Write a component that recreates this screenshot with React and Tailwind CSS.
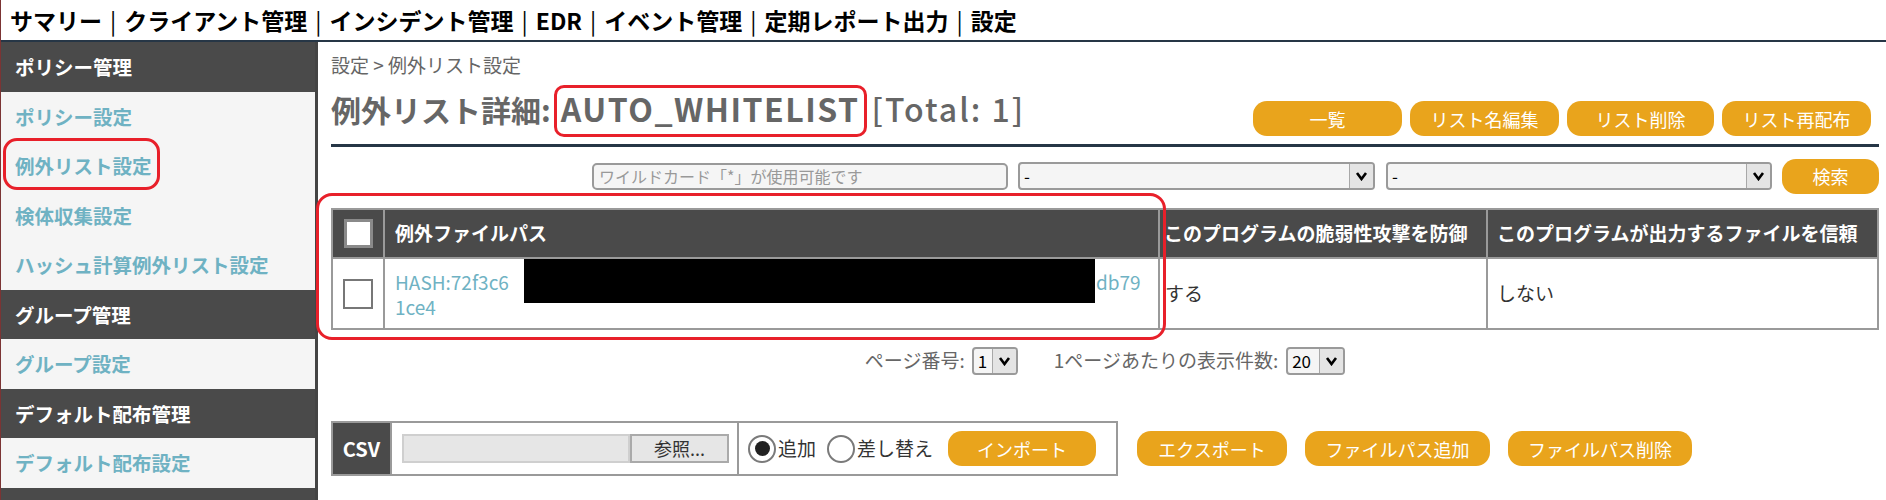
import React from 'react';

const NAV = ['サマリー', 'クライアント管理', 'インシデント管理', 'EDR', 'イベント管理', '定期レポート出力', '設定'];

const SIDEBAR = [
  { head: true, label: 'ポリシー管理' },
  { label: 'ポリシー設定' },
  { label: '例外リスト設定' },
  { label: '検体収集設定' },
  { label: 'ハッシュ計算例外リスト設定' },
  { head: true, label: 'グループ管理' },
  { label: 'グループ設定' },
  { head: true, label: 'デフォルト配布管理' },
  { label: 'デフォルト配布設定' },
  { head: true, label: '' },
];

function Chevron() {
  return (
    <svg width="13" height="10" viewBox="0 0 13 10">
      <path d="M2 2 L6.5 8 L11 2" fill="none" stroke="#000" strokeWidth="2.6" />
    </svg>
  );
}

function FakeSelect({ value, className }) {
  return (
    <div className={`flex items-stretch rounded-[4px] border-2 border-[#9a9a9a] bg-[#f5f5f5] overflow-hidden ${className}`}>
      <span className="flex-1 flex items-center pl-[4px] text-[17px] text-black">{value}</span>
      <span className="w-[24px] flex items-center justify-center border-l border-[#a8a8a8] bg-[#e4e4e4]">
        <Chevron />
      </span>
    </div>
  );
}

function OrangeBtn({ children, className }) {
  return (
    <button className={`h-[35px] rounded-[14px] bg-[#e9a41c] text-white text-[18px] leading-none ${className}`}>
      {children}
    </button>
  );
}

function Radio({ checked }) {
  return (
    <span className="w-[28px] h-[28px] rounded-full border-2 border-[#7a7a7a] bg-white flex items-center justify-center">
      {checked && <span className="w-[15px] h-[15px] rounded-full bg-[#222]" />}
    </span>
  );
}

export default function App() {
  return (
    <div className="relative w-[1886px] h-[500px] overflow-hidden bg-white border-l border-[#7b3434] font-['Noto_Sans_CJK_JP','Noto_Sans',sans-serif]">
      {/* top nav */}
      <div className="h-[40px] flex items-center pl-[9px] text-[23px] font-bold text-black whitespace-nowrap">
        {NAV.map((n, i) => (
          <span key={n} className="flex items-center">
            {i > 0 && <span className="mx-[8px] font-normal">|</span>}
            {n}
          </span>
        ))}
      </div>
      <div className="h-[2px] bg-[#263646]" />

      <div className="flex">
        {/* sidebar */}
        <div className="w-[319px] h-[458px] border-r-[3px] border-[#444] bg-[#f5f5f5] overflow-hidden">
          {SIDEBAR.map((s, i) => (
            <div key={i}
              className={`h-[49.5px] flex items-center pl-[14px] text-[19.5px] font-bold ${
                s.head ? 'bg-[#4a4a4a] text-white' : 'bg-[#f5f5f5] text-[#6fb2c3]'
              }`}>
              {s.label}
            </div>
          ))}
        </div>

        {/* main */}
        <div className="flex-1 pl-[13px] pr-[7px]">
          <div className="pt-[11px] leading-[24px] text-[19px] text-[#666]">設定 &gt; 例外リスト設定</div>

          <div className="h-[59px] flex justify-between">
            <div className="mt-[10px] leading-[42px] text-[30px] text-[#666] whitespace-nowrap">
              <span className="font-bold">例外リスト詳細:</span>
              <span className="font-bold ml-[10px] text-[32px] tracking-[1.5px]">AUTO_WHITELIST</span>
              <span className="ml-[12px] text-[32px] tracking-[2px] font-medium">[Total: 1]</span>
            </div>
            <div className="self-end flex gap-[8px] mr-[8px]">
              <OrangeBtn className="w-[149px]">一覧</OrangeBtn>
              <OrangeBtn className="w-[149px]">リスト名編集</OrangeBtn>
              <OrangeBtn className="w-[147px]">リスト削除</OrangeBtn>
              <OrangeBtn className="w-[149px]">リスト再配布</OrangeBtn>
            </div>
          </div>
          <div className="mt-[8px] h-[3px] bg-[#263646]" />

          {/* search row */}
          <div className="mt-[12px] h-[34px] flex items-center justify-end">
            <div className="w-[416px] h-[27px] rounded-[5px] border-2 border-[#9a9a9a] bg-[#f5f5f5] flex items-center pl-[5px] text-[16px] text-[#999]">
              ワイルドカード「*」が使用可能です
            </div>
            <FakeSelect value="-" className="ml-[10px] w-[357px] h-[28px]" />
            <FakeSelect value="-" className="ml-[11px] w-[386px] h-[28px]" />
            <OrangeBtn className="ml-[10px] w-[97px] h-[34px]">検索</OrangeBtn>
          </div>

          {/* table */}
          <table className="mt-[15px] w-[1546px] table-fixed border-collapse border-2 border-[#9a9a9a]">
            <colgroup>
              <col className="w-[52px]" />
              <col className="w-[775px]" />
              <col className="w-[328px]" />
              <col className="w-[391px]" />
            </colgroup>
            <thead>
              <tr className="h-[49px] bg-[#4a4a4a] text-white text-[19px] font-bold text-left">
                <th className="border-2 border-[#9a9a9a] p-0">
                  <span className="mx-auto block w-[29px] h-[29px] bg-white border-[3px] border-[#8a8a8a]" />
                </th>
                <th className="border-2 border-[#9a9a9a] pl-[10px] font-bold">例外ファイルパス</th>
                <th className="border-2 border-[#9a9a9a] pl-[4px] font-bold whitespace-nowrap">このプログラムの脆弱性攻撃を防御</th>
                <th className="border-2 border-[#9a9a9a] pl-[9px] font-bold whitespace-nowrap">このプログラムが出力するファイルを信頼</th>
              </tr>
            </thead>
            <tbody>
              <tr className="h-[71px] text-[19px] text-[#333]">
                <td className="border-2 border-[#9a9a9a] p-0">
                  <span className="mx-auto block w-[30px] h-[30px] bg-white border-2 border-[#777]" />
                </td>
                <td className="border-2 border-[#9a9a9a] pl-[10px] text-[#6fb2c3] leading-[25px]">
                  <div className="whitespace-nowrap">
                    <span className="inline-block w-[129px]">HASH:72f3c6</span>
                    <span className="inline-block w-[572px]" />
                    <span>db79</span>
                  </div>
                  <div>1ce4</div>
                </td>
                <td className="border-2 border-[#9a9a9a] pl-[5px]">する</td>
                <td className="border-2 border-[#9a9a9a] pl-[9px]">しない</td>
              </tr>
            </tbody>
          </table>

          {/* pagination */}
          <div className="mt-[17px] h-[27px] flex items-center justify-center text-[19px] text-[#666] whitespace-nowrap">
            <span>ページ番号:</span>
            <FakeSelect value="1" className="ml-[7px] w-[46px] h-[28px]" />
            <span className="ml-[36px]">1ページあたりの表示件数:</span>
            <FakeSelect value="20" className="ml-[8px] w-[59px] h-[28px]" />
          </div>

          {/* csv */}
          <div className="mt-[47px] flex items-center">
            <div className="h-[55px] w-[787px] flex border-2 border-[#9a9a9a]">
              <div className="w-[57px] bg-[#4a4a4a] text-white font-bold text-[20px] flex items-center justify-center">CSV</div>
              <div className="w-[349px] border-x-2 border-[#9a9a9a] flex items-center pl-[10px]">
                <span className="w-[228px] h-[29px] bg-[#e6e6e6] border-2 border-[#cfcfcf]" />
                <span className="w-[99px] h-[29px] bg-[#e6e6e6] border-2 border-[#aaa] flex items-center justify-center text-[18px] text-[#333]">参照...</span>
              </div>
              <div className="flex-1 flex items-center pl-[9px] text-[19px] text-[#333]">
                <Radio checked />
                <span className="ml-[2px]">追加</span>
                <span className="ml-[11px]"><Radio /></span>
                <span className="ml-[2px]">差し替え</span>
                <OrangeBtn className="ml-[15px] w-[148px] h-[34px]">インポート</OrangeBtn>
              </div>
            </div>
            <OrangeBtn className="ml-[19px] w-[150px]">エクスポート</OrangeBtn>
            <OrangeBtn className="ml-[18px] w-[185px]">ファイルパス追加</OrangeBtn>
            <OrangeBtn className="ml-[18px] w-[184px]">ファイルパス削除</OrangeBtn>
          </div>
        </div>
      </div>

      {/* redaction */}
      <div className="absolute left-[523px] top-[259px] w-[571px] h-[44px] bg-black" />

      {/* red annotations */}
      <div className="absolute left-[2px] top-[138px] w-[157px] h-[52px] rounded-[14px] border-[3px] border-[#e8202a]" />
      <div className="absolute left-[553px] top-[85px] w-[313px] h-[52px] rounded-[10px] border-[3px] border-[#e8202a]" />
      <div className="absolute left-[315px] top-[193px] w-[850px] h-[147px] rounded-[16px] border-[3px] border-[#e8202a]" />
    </div>
  );
}
